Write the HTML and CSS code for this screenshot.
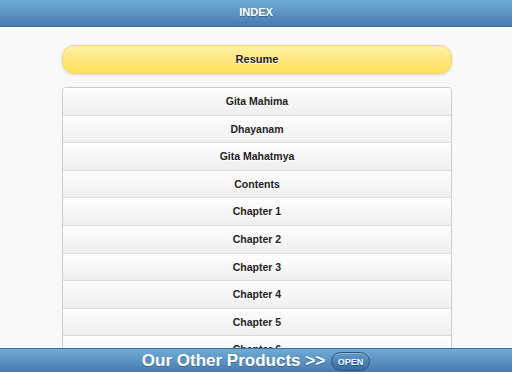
FILE: index.html
```html
<!DOCTYPE html>
<html lang="en">
<head>
  <meta charset="UTF-8" />
  <meta name="viewport" content="width=device-width, initial-scale=1.0" />
  <title>Index</title>
  <link rel="stylesheet" href="styles.css">
</head>
<body>
  <header class="bar">
    <h1>INDEX</h1>
  </header>

  <div class="content">
    <a class="resume" href="#">Resume</a>

    <ul class="menu">
      <li><a href="#">Gita Mahima</a></li>
      <li><a href="#">Dhayanam</a></li>
      <li><a href="#">Gita Mahatmya</a></li>
      <li><a href="#">Contents</a></li>
      <li><a href="#">Chapter 1</a></li>
      <li><a href="#">Chapter 2</a></li>
      <li><a href="#">Chapter 3</a></li>
      <li><a href="#">Chapter 4</a></li>
      <li><a href="#">Chapter 5</a></li>
      <li><a href="#">Chapter 6</a></li>
      <li><a href="#">Chapter 7</a></li>
    </ul>
  </div>

  <div class="footer">
    <span>Our Other Products &gt;&gt;</span>
    <a class="open" href="#">OPEN</a>
  </div>
</body>
</html>
```

FILE: styles.css
```css
body { font-family: "Liberation Sans", Arial, sans-serif; margin: 0; background: #f9f9f9; overflow: hidden; }
a { text-decoration: none; }
.bar { height: 27px; box-sizing: border-box; background: linear-gradient(#6facd5, #497bae); border-bottom: 1px solid #456f9a; text-align: center; }
.bar h1 { margin: 0; font-size: 11px; line-height: 25px; color: #fff; text-shadow: 0 1px 0 #3e6790; }
.content { padding: 18px 60px 0 62px; }
.resume { display: block; height: 29px; box-sizing: border-box; line-height: 27px; text-align: center; font-size: 11px; font-weight: bold; color: #222; text-shadow: 0 1px 0 #fff; background: linear-gradient(#fff0a5, #ffe05a); border: 1px solid #f2d577; border-radius: 12px; box-shadow: 0 1px 3px rgba(0,0,0,0.15); }
.menu { list-style: none; margin: 13px 0 0; padding: 0; border: 1px solid #ccc; border-radius: 4px 4px 0 0; overflow: hidden; }
.menu li { border-top: 1px solid #ddd; }
.menu li:first-child { border-top: none; }
.menu a { display: block; height: 26.6px; box-sizing: border-box; line-height: 26px; text-align: center; font-size: 10.5px; font-weight: bold; color: #222; text-shadow: 0 1px 0 #fff; background: linear-gradient(#fefefe, #efefef); }
.footer { position: fixed; left: 0; right: 0; bottom: 0; height: 23px; background: linear-gradient(#6facd5, #497bae); border-top: 1px solid #456f9a; display: flex; align-items: center; justify-content: center; gap: 6px; }
.footer span { font-size: 17px; font-weight: bold; color: #fff; text-shadow: 0 1px 0 #3e6790; }
.open { display: block; height: 19px; width: 39px; box-sizing: border-box; margin-top: 1px; border: 1px solid #2a5580; border-radius: 10px; background: linear-gradient(#5f9cc5, #396b9e); color: #fff; font-size: 9px; font-weight: bold; line-height: 18px; text-align: center; text-shadow: 0 1px 0 #194b7e; box-shadow: inset 0 1px 0 rgba(255,255,255,0.3); }
```
